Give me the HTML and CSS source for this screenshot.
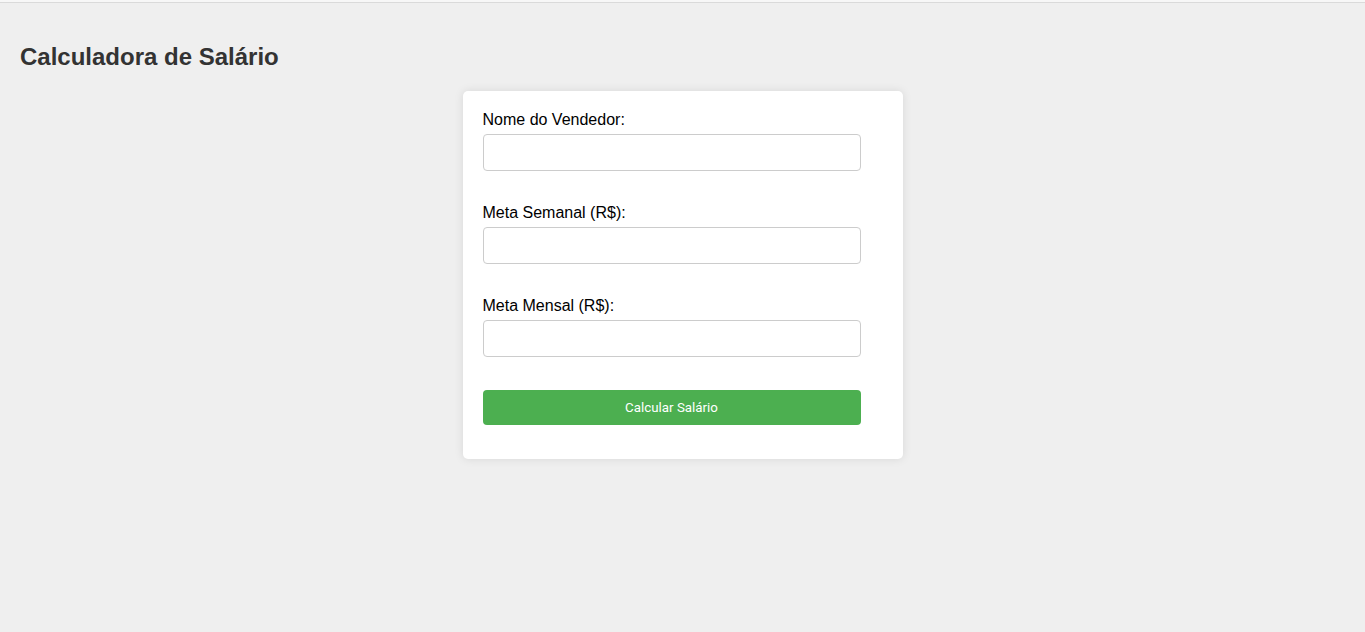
FILE: index.html
```html
<!DOCTYPE html>
<html lang="pt-BR">
<head>
<meta charset="UTF-8">
<title>Calculadora de Salário</title>
<link rel="stylesheet" href="styles.css">
</head>
<body>
<div class="topline"></div>
<div class="page">
  <h2 class="title">Calculadora de Salário</h2>
  <div class="card">
    <form class="form">
      <label class="label" for="nome">Nome do Vendedor:</label>
      <input class="input" type="text" id="nome">
      <label class="label" for="semanal">Meta Semanal (R$):</label>
      <input class="input" type="text" id="semanal">
      <label class="label" for="mensal">Meta Mensal (R$):</label>
      <input class="input" type="text" id="mensal">
      <button class="button" type="button">Calcular Salário</button>
    </form>
  </div>
</div>
</body>
</html>
```

FILE: styles.css
```css
html, body {
  margin: 0;
  padding: 0;
  background: #efefef;
  font-family: "Liberation Sans", Arial, sans-serif;
}

.topline {
  height: 2px;
  background: #f7f7f7;
  border-bottom: 1px solid #dadada;
}

.page {
  padding: 20px;
}

.title {
  margin: 20px 0;
  font-size: 24px;
  line-height: 28px;
  font-weight: bold;
  color: #333;
}

.card {
  max-width: 400px;
  margin: 0 auto;
  padding: 20px;
  background: #fff;
  border-radius: 5px;
  box-shadow: 0 0 10px rgba(0, 0, 0, 0.1);
}

.form {
  display: flex;
  flex-direction: column;
  align-items: flex-start;
}

.label {
  display: block;
  margin-bottom: 5px;
  font-size: 16px;
  line-height: 18px;
  color: #000;
}

.input {
  display: block;
  box-sizing: border-box;
  width: 378px;
  height: 37px;
  padding: 8px;
  margin: 0 0 33px 0;
  border: 1px solid #ccc;
  border-radius: 4px;
  font-size: 16px;
  background: #fff;
}

.button {
  display: block;
  box-sizing: border-box;
  width: 378px;
  height: 35px;
  padding: 10px;
  margin: 0 0 14px 0;
  border: none;
  border-radius: 4px;
  background: #4caf50;
  color: #fff;
  font-family: Roboto, "Liberation Sans", sans-serif;
  font-size: 13.333px;
  line-height: 15px;
  cursor: pointer;
}
```
